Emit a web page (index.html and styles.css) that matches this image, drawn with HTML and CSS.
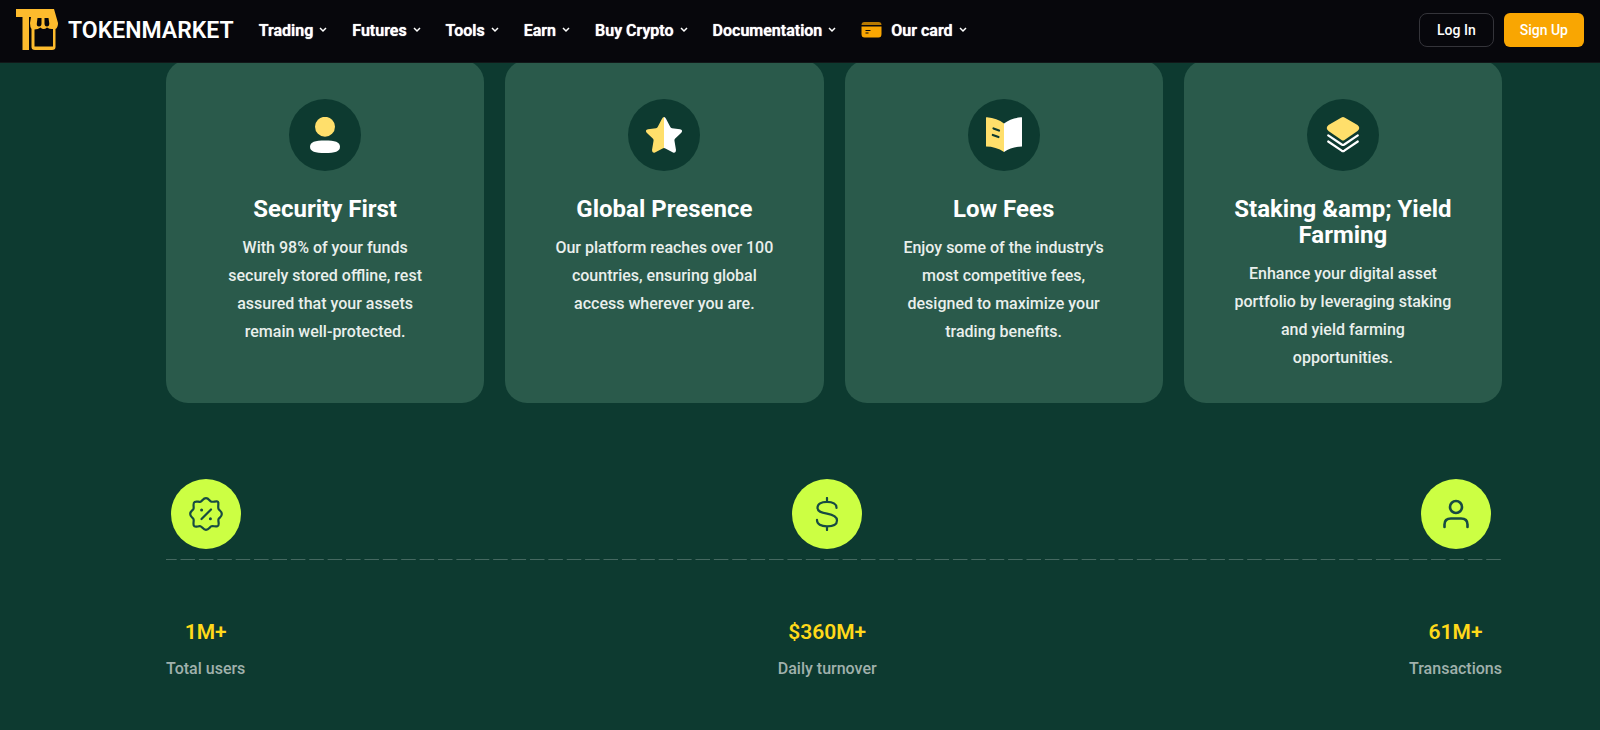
FILE: index.html
```html
<!DOCTYPE html>
<html lang="en">
<head>
  <meta charset="UTF-8">
  <meta name="viewport" content="width=device-width, initial-scale=1">
  <title>TokenMarket</title>
  <link rel="stylesheet" href="styles.css">
</head>
<body>
  <header class="header">
    <a class="brand" href="#">
      <svg class="logo" viewBox="0 0 42 42" aria-hidden="true">
        <path fill="#fdbb2d" d="M0 0H38L42 14C42 18 40.500 19.500 39.500 20V38Q39.500 41 36 41H19Q15.500 41 15.500 38V20Q14 18 14 14L15 8H13V41H6.500V8H0Z"/>
        <path fill="#07070c" d="M18.500 20.500Q22 20.500 24.500 18.500Q27.500 21.500 31 18.500Q34 20.500 37 20V37.500H18.500Z"/>
        <path fill="#07070c" d="M21.500 9H25.500V14.500Q25.500 17.500 23 17.500Q20.500 17.500 20.800 14.500ZM28.500 9H32.500L33.300 14.500Q33.300 17.500 31 17.500Q28.500 17.500 28.500 14.500Z"/>
      </svg>
      <span>TOKENMARKET</span>
    </a>
    <nav class="nav">
      <a href="#">Trading <svg class="chevron" viewBox="0 0 8 8"><path d="M1 2l3 3 3-3"/></svg></a>
      <a href="#">Futures <svg class="chevron" viewBox="0 0 8 8"><path d="M1 2l3 3 3-3"/></svg></a>
      <a href="#">Tools <svg class="chevron" viewBox="0 0 8 8"><path d="M1 2l3 3 3-3"/></svg></a>
      <a href="#">Earn <svg class="chevron" viewBox="0 0 8 8"><path d="M1 2l3 3 3-3"/></svg></a>
      <a href="#">Buy Crypto <svg class="chevron" viewBox="0 0 8 8"><path d="M1 2l3 3 3-3"/></svg></a>
      <a href="#">Documentation <svg class="chevron" viewBox="0 0 8 8"><path d="M1 2l3 3 3-3"/></svg></a>
      <a href="#">
        <svg class="card-icon" viewBox="0 0 20 16"><path fill="#b87900" d="M3 0H17Q20 0 20 3H0Q0 0 3 0Z"/><path fill="#f9a602" d="M0 4.500H20V12Q20 15.500 17 15.500H3Q0 15.500 0 12Z"/><path stroke="#07070c" stroke-width="1.200" d="M4 8.500H9M4 11H7"/></svg>
        Our card <svg class="chevron" viewBox="0 0 8 8"><path d="M1 2l3 3 3-3"/></svg>
      </a>
    </nav>
    <div class="actions">
      <button class="btn btn-outline" type="button">Log In</button>
      <button class="btn btn-primary" type="button">Sign Up</button>
    </div>
  </header>

  <main class="main">
    <section class="features">
      <article class="feature">
        <div class="feature-icon">
          <svg viewBox="0 0 36 36"><circle cx="18" cy="9.800" r="10" fill="#ffdf6b"/><path fill="#fff" d="M18 23.500C28 23.500 33 25 33 29.800S28 36 18 36 3 34.600 3 29.800 8 23.500 18 23.500Z"/></svg>
        </div>
        <h3>Security First</h3>
        <p>With 98% of your funds securely stored offline, rest assured that your assets remain well-protected.</p>
      </article>
      <article class="feature">
        <div class="feature-icon">
          <svg viewBox="0 0 36 36"><path fill="#ffdf6b" d="M18 0Q16.800 0 16 1.800L11.800 9.800Q11.300 11 10 11.200L2 12.200Q-1.400 13 .700 15.800L6.800 21.500Q7.800 22.500 7.500 24L6 33Q6 36.500 9 35.500L16.600 31.500 18 31Z"/><path fill="#fff" d="M18 0Q19.200 0 20 1.800L24.200 9.800Q24.700 11 26 11.200L34 12.200Q37.400 13 35.300 15.800L29.200 21.500Q28.200 22.500 28.500 24L30 33Q30 36.500 27 35.500L19.400 31.500 18 31Z"/></svg>
        </div>
        <h3>Global Presence</h3>
        <p>Our platform reaches over 100 countries, ensuring global access wherever you are.</p>
      </article>
      <article class="feature">
        <div class="feature-icon">
          <svg viewBox="0 0 36 36"><path fill="#ffdf6b" d="M0 .5Q0 0 1 .300Q11 1 18 6.500V35Q10 29.500 0 29.500Z"/><path fill="#fff" d="M18 6.500Q25 1 35 .300Q36 0 36 .5V29.500Q26 29.500 18 35Z"/><path stroke="#0d3a30" stroke-width="2.200" stroke-linecap="round" d="M7.500 11.500L13 13.500M6.800 18L12.500 20"/></svg>
        </div>
        <h3>Low Fees</h3>
        <p>Enjoy some of the industry's most competitive fees, designed to maximize your trading benefits.</p>
      </article>
      <article class="feature">
        <div class="feature-icon">
          <svg viewBox="0 0 36 36"><path fill="#ffdf6b" d="M16.500 .5Q18 -.300 19.500 .5L32.500 8Q36 11 32.500 14L19.500 23Q18 24 16.500 23L3.500 14Q0 11 3.500 8Z"/><path fill="none" stroke="#fff" stroke-width="2.200" stroke-linecap="round" stroke-linejoin="round" d="M3.200 18.300L16.700 27.500Q18 28.300 19.300 27.500L32.800 18.300M3.200 24.500L16.700 33.700Q18 34.500 19.300 33.700L32.800 24.500"/></svg>
        </div>
        <h3>Staking &amp;amp; Yield Farming</h3>
        <p>Enhance your digital asset portfolio by leveraging staking and yield farming opportunities.</p>
      </article>
    </section>

    <section class="stats">
      <div class="stat">
        <div class="stat-icon">
          <svg viewBox="0 0 34 34"><path d="M17 1.200C20 1.200 20.500 4.200 22.500 4.700S29 3.200 29.300 5.500 28.800 10 29.500 11.800 32.800 14 32.800 17 30.200 20.500 29.500 22.200 31 28.500 28.500 29.200 24.300 28.700 22.500 29.300 20 32.800 17 32.800 13.500 29.900 11.500 29.300 5.700 31 4.800 28.600 5.200 24 4.500 22.200 1.200 20 1.200 17 3.800 13.500 4.500 11.800 3.500 5.900 5.600 4.900 9.700 5.300 11.500 4.700 14 1.200 17 1.200Z"/><path d="M12.500 22L22 12.500"/><path class="dot" d="M12.600 13h.010M21.400 21.700h.010"/></svg>
        </div>
        <strong>1M+</strong>
        <span>Total users</span>
      </div>
      <div class="stat">
        <div class="stat-icon">
          <svg viewBox="0 0 34 34"><path d="M17 1V4.800M17 29.300V33M26.500 11V10.500C26.500 7 23 4.800 17 4.800S7.500 7 7.500 10.700C7.500 14.500 11 15.700 17 16.700S27 19.500 27 23.500 23 29.300 17 29.300 7 27 7 23.300V22.800"/></svg>
        </div>
        <strong>$360M+</strong>
        <span>Daily turnover</span>
      </div>
      <div class="stat">
        <div class="stat-icon">
          <svg viewBox="0 0 34 34"><g class="bold"><circle cx="17" cy="10" r="6"/><path d="M5.500 30V27.500Q5.500 21.500 12 21.500H22Q28.500 21.500 28.500 27.500V30"/></g></svg>
        </div>
        <strong>61M+</strong>
        <span>Transactions</span>
      </div>
    </section>
  </main>
</body>
</html>
```
FILE: styles.css
```css
* {
  box-sizing: border-box;
}

body {
  margin: 0;
  font-family: Roboto, "Liberation Sans", sans-serif;
  background: #0d3a30;
  color: #fff;
}

a {
  color: inherit;
  text-decoration: none;
}

h3, p {
  margin: 0;
}

/* header */
.header {
  position: fixed;
  top: 0;
  left: 0;
  right: 0;
  z-index: 10;
  display: flex;
  align-items: center;
  height: 63px;
  padding: 0 16px 2px;
  background: #07070c;
  border-bottom: 1px solid #111718;
}

.brand {
  display: flex;
  align-items: center;
  gap: 10px;
  font-size: 23px;
  font-weight: 600;
}

.logo {
  width: 42px;
  height: 42px;
}

.nav {
  display: flex;
  gap: 25px;
  margin-left: 25px;
  font-size: 16px;
  font-weight: 600;
  text-shadow: 0 0 1px #fff;
}

.nav a {
  display: flex;
  align-items: center;
  gap: 6px;
}

.chevron {
  width: 8px;
  height: 8px;
  fill: none;
  stroke: #fff;
  stroke-width: 1.5;
}

.card-icon {
  width: 21px;
  height: 16px;
  margin-right: 3px;
}

.actions {
  display: flex;
  align-items: center;
  gap: 10px;
  margin-left: auto;
}

.btn {
  height: 34px;
  padding: 0 16px;
  border: 0;
  border-radius: 6px;
  font-family: inherit;
  font-size: 14px;
  font-weight: 500;
  color: #fff;
}

.btn-outline {
  padding: 0 17px;
  background: transparent;
  border: 1px solid #34343a;
  border-radius: 8px;
}

.btn-primary {
  background: #f9a602;
}

/* features */
.main {
  padding: 60px 98px 48px 166px;
}

.features {
  display: grid;
  grid-template-columns: repeat(4, 1fr);
  gap: 21px;
}

.feature {
  padding: 39px 47px 31px;
  border-radius: 22px;
  background: #2a5a4b;
  text-align: center;
}

.feature-icon {
  display: flex;
  align-items: center;
  justify-content: center;
  width: 72px;
  height: 72px;
  margin: 0 auto 25px;
  border-radius: 50%;
  background: #0d3a30;
}

.feature-icon svg {
  width: 36px;
  height: 36px;
}

.feature h3 {
  margin: 0 -10px 12px;
  font-size: 24px;
  line-height: 26px;
  font-weight: 700;
}

.feature p {
  font-size: 16px;
  line-height: 28px;
  font-weight: 500;
  color: #e9efec;
}

/* stats, the dashed line runs behind the items */
.stats {
  display: flex;
  justify-content: space-between;
  margin-top: 76px;
  background: linear-gradient(90deg, #456860 11px, transparent 11px, transparent 15px, #456860 15px) 0 80px / calc((100% - 11px) / 72) 1px repeat-x;
}

.stat {
  display: flex;
  flex-direction: column;
  align-items: center;
}

.stat-icon {
  display: flex;
  align-items: center;
  justify-content: center;
  width: 70px;
  height: 70px;
  margin-bottom: 70px;
  border-radius: 50%;
  background: #ccff43;
}

.stat-icon svg {
  width: 34px;
  height: 34px;
  fill: none;
  stroke: #174b43;
  stroke-width: 2.2;
  stroke-linecap: round;
}

.stat-icon .dot {
  stroke-width: 3;
}

.stat-icon .bold {
  stroke-width: 2.6;
}

.stat strong {
  margin-bottom: 10px;
  font-size: 21px;
  line-height: 26px;
  font-weight: 600;
  color: #ffd91a;
}

.stat span {
  font-size: 16px;
  line-height: 28px;
  font-weight: 500;
  color: #a0b1ac;
}
```
